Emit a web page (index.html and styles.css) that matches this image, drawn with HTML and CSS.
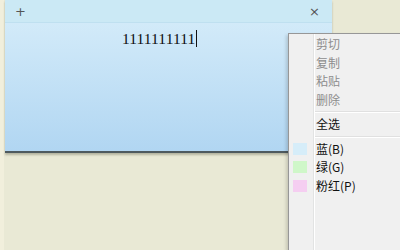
FILE: index.html
```html
<!DOCTYPE html>
<html>
<head>
<meta charset="utf-8">
<link rel="stylesheet" href="styles.css">
</head>
<body>
<div class="desk">
  <div class="note">
    <div class="title"><span class="plus">+</span><span class="close">×</span></div>
    <div class="body"><span class="txt">1111111111</span><span class="caret"></span></div>
  </div>
  <div class="menu">
    <div class="item dis">剪切</div>
    <div class="item dis">复制</div>
    <div class="item dis">粘贴</div>
    <div class="item dis">删除</div>
    <div class="sep"></div>
    <div class="item">全选</div>
    <div class="sep"></div>
    <div class="item"><span class="sw blue"></span>蓝(B)</div>
    <div class="item"><span class="sw green"></span>绿(G)</div>
    <div class="item"><span class="sw pink"></span>粉红(P)</div>
  </div>
</div>
</body>
</html>
```
FILE: styles.css
```css
html, body { margin: 0; padding: 0; }
body { width: 400px; height: 250px; overflow: hidden; background: #e9e9d5; font-family: "Noto Sans CJK SC", "Liberation Sans", sans-serif; }
.desk { position: relative; width: 400px; height: 250px; overflow: hidden; background: linear-gradient(90deg, #f1efdc 0, #f1efdc 4px, #e9e9d5 4px); }
.note { position: absolute; left: 5px; top: 0; width: 327px; height: 151px; background: linear-gradient(#d8eefa, #b1d6f2); border-bottom: 2px solid #4e5a5e; box-shadow: 0 2px 2px rgba(80,80,60,0.35); }
.title { height: 22px; background: #cbe9f5; border-bottom: 1px solid #bfe0f0; display: flex; align-items: center; justify-content: space-between; padding: 0 12px 0 10px; color: #555; font-family: "DejaVu Sans", sans-serif; }
.plus { font-size: 13px; line-height: 1; }
.close { font-size: 13px; line-height: 1; }
.body { display: flex; align-items: flex-start; padding: 7px 0 0 117px; }
.txt { font-family: "Liberation Serif", serif; font-size: 15.5px; color: #111; line-height: 18px; letter-spacing: 0.1px; }
.caret { width: 1px; height: 17px; background: #111; margin-left: 1px; }
.menu { position: absolute; left: 288px; top: 33px; width: 120px; height: 217px; background: #f0f0f0; border: 1px solid #979797; border-bottom: 0; box-sizing: border-box; padding: 1px 0 0 0; box-shadow: -2px 2px 3px rgba(0,0,0,0.15); }
.menu::before { content: ""; position: absolute; left: 24px; top: 0; bottom: 0; width: 1px; background: #e2e3e3; border-right: 1px solid #fff; }
.item { position: relative; height: 18.5px; line-height: 18.5px; font-size: 12px; color: #111; padding-left: 27px; }
.item.dis { color: #8d8d8d; }
.sep { height: 1px; background: #e0e0e0; border-bottom: 1px solid #fff; margin: 2px 0 2px 26px; }
.sw { position: absolute; left: 4px; top: 3px; width: 14px; height: 12px; }
.blue { background: #d6edf9; }
.green { background: #cff7c9; }
.pink { background: #f5cef1; }
```
